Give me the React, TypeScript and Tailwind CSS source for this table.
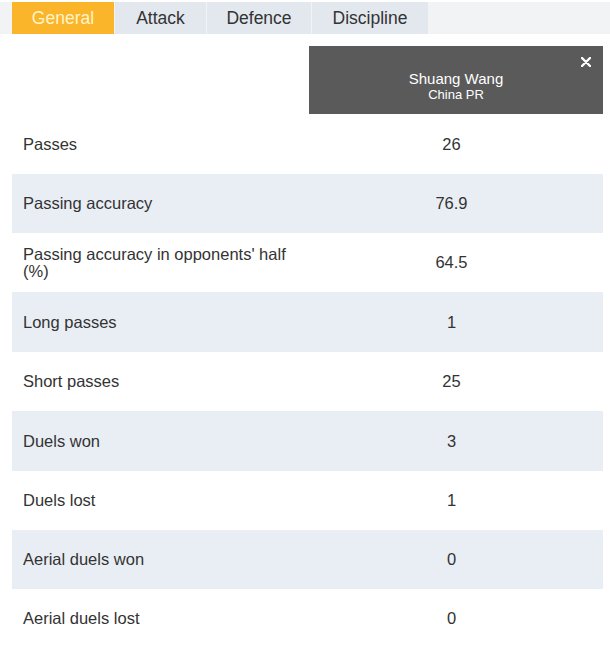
import React from 'react';

const tabs = [
    { label: 'General', width: 'w-[102px]', active: true },
    { label: 'Attack', width: 'w-[91px]', active: false },
    { label: 'Defence', width: 'w-[104px]', active: false },
    { label: 'Discipline', width: 'w-[116px]', active: false },
];

// row heights alternate a little in the source table
const stats: [string, string, string][] = [
    ['Passes', '26', 'h-[59px]'],
    ['Passing accuracy', '76.9', 'h-[59px]'],
    ["Passing accuracy in opponents' half (%)", '64.5', 'h-[59px]'],
    ['Long passes', '1', 'h-[60px]'],
    ['Short passes', '25', 'h-[59px]'],
    ['Duels won', '3', 'h-[60px]'],
    ['Duels lost', '1', 'h-[59px]'],
    ['Aerial duels won', '0', 'h-[59px]'],
    ['Aerial duels lost', '0', 'h-[59px]'],
];

export default function App() {
    return (
        <div
            className="w-[610px] h-[648px] bg-white overflow-hidden text-[#333333]"
            style={{ fontFamily: '"Liberation Sans", Arial, sans-serif' }}
        >
            {/* Tabs */}
            <div className="mt-[2px] h-[32px] bg-[#f2f3f5] flex pl-[12px] gap-px">
                {tabs.map((t) => (
                    <div
                        key={t.label}
                        className={`${t.width} h-full flex items-center justify-center text-[17.5px] ${
                            t.active ? 'bg-[#fbb52b] text-[#fff4c8]' : 'bg-[#e3e8ef] text-[#333333]'
                        }`}
                    >
                        {t.label}
                    </div>
                ))}
            </div>

            {/* Player header */}
            <div className="flex pl-[12px] pt-[12px] pb-px">
                <div className="w-[288px]" />
                <div className="ml-[9px] w-[294px] h-[68px] bg-[#5a5a5a] text-white relative flex flex-col items-center justify-center pt-[12px]">
                    <div className="text-[15px] leading-[17px]">Shuang Wang</div>
                    <div className="text-[13px] leading-[15px]">China PR</div>
                    <svg className="absolute right-[12px] top-[11px]" width="10" height="10" viewBox="0 0 10 10">
                        <path d="M1 1L9 9M9 1L1 9" stroke="white" strokeWidth="2.4" strokeLinecap="round" />
                    </svg>
                </div>
            </div>

            {/* Stats */}
            <div className="pl-[12px] w-[603px]">
                {stats.map(([label, value, h], i) => (
                    <div
                        key={label}
                        className={`flex ${h} items-center text-[16.5px] ${i % 2 === 1 ? 'bg-[#e9eef5]' : 'bg-white'}`}
                    >
                        <div className="w-[288px] pl-[11px] pr-[8px] leading-[17px]">{label}</div>
                        <div className="flex-1 text-center">{value}</div>
                    </div>
                ))}
            </div>
        </div>
    );
}
